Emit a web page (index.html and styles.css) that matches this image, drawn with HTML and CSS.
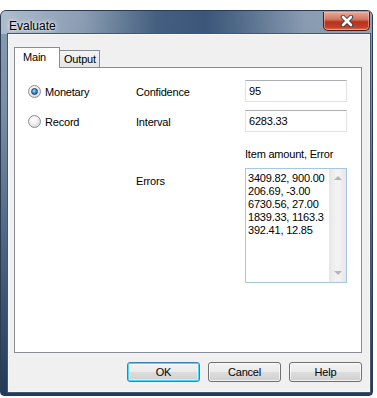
FILE: index.html
```html
<!DOCTYPE html>
<html lang="en">
<head>
    <meta charset="UTF-8">
    <meta name="viewport" content="width=device-width, initial-scale=1.0">
    <title>Evaluate</title>
    <link rel="stylesheet" href="styles.css">
</head>
<body>
    <div class="window">
        <div class="titlebar">
            <span class="title">Evaluate</span>
            <button class="close" aria-label="Close">
                <svg width="14" height="12" viewBox="0 0 14 12">
                    <path d="M3 2 L11 10 M11 2 L3 10" stroke="#3a3a3a" stroke-width="4.5" stroke-linecap="round"/>
                    <path d="M3 2 L11 10 M11 2 L3 10" stroke="#fff" stroke-width="2.6" stroke-linecap="round"/>
                </svg>
            </button>
        </div>

        <div class="client">
            <div class="tabs">
                <div class="tab active">Main</div>
                <div class="tab">Output</div>
            </div>

            <div class="panel">
                <div class="form">
                    <label class="radio checked"><span class="dot"></span>Monetary</label>
                    <span class="label">Confidence</span>
                    <div class="field">95</div>

                    <label class="radio"><span class="dot"></span>Record</label>
                    <span class="label">Interval</span>
                    <div class="field">6283.33</div>

                    <span class="hint">Item amount, Error</span>

                    <span class="label errors-label">Errors</span>
                    <div class="list">
                        <div class="list-text">3409.82, 900.00<br>206.69, -3.00<br>6730.56, 27.00<br>1839.33, 1163.3<br>392.41, 12.85</div>
                        <div class="scrollbar">
                            <span class="arrow up"></span>
                            <span class="arrow down"></span>
                        </div>
                    </div>
                </div>
            </div>

            <div class="buttons">
                <button class="btn default">OK</button>
                <button class="btn">Cancel</button>
                <button class="btn">Help</button>
            </div>
        </div>
    </div>
</body>
</html>
```

FILE: styles.css
```css
body {
    margin: 0;
    padding: 0;
    background-color: #fff;
    font-family: 'Liberation Sans', Arial, sans-serif;
    font-size: 11px;
    letter-spacing: -0.2px;
    color: #000;
}

.window {
    width: 373px;
    height: 386px;
    margin-top: 10px;
    box-sizing: border-box;
    padding: 0 2px 3px 7px;
    border: 1px solid #2b3c52;
    border-radius: 6px 6px 4px 4px;
    background: linear-gradient(to bottom, #8a9cb2 0%, #7a8ea6 25%, #46607f 65%, #1f3a5c 100%);
    display: flex;
    flex-direction: column;
}

.titlebar {
    height: 23px;
    display: flex;
    align-items: flex-start;
    justify-content: space-between;
    margin: 0 -2px 0 -7px;
    padding-left: 8px;
    border-radius: 5px 5px 0 0;
    background: linear-gradient(90deg, rgba(190, 202, 215, 0.7) 0%, rgba(150, 166, 186, 0.2) 22%, rgba(60, 88, 122, 0.9) 42%, #3b5679 55%, rgba(60, 88, 122, 0.8) 62%, rgba(140, 158, 180, 0.2) 82%, rgba(160, 175, 195, 0.4) 100%);
}

.title {
    font-size: 12px;
    line-height: 12px;
    letter-spacing: 0;
    margin-top: 9px;
    color: #000;
    text-shadow: 0 0 6px #fff, 0 0 3px #fff;
}

.close {
    width: 47px;
    height: 19px;
    margin: 1px 2px 0 0;
    padding: 0;
    border: 1px solid #4b1c18;
    border-top: none;
    border-radius: 0 0 5px 5px;
    background: linear-gradient(to bottom, #e8a895 0%, #d27a66 40%, #b8321c 55%, #c2402a 85%, #dc7d5c 100%);
    box-shadow: inset 0 0 0 1px rgba(255, 200, 180, 0.5);
    display: flex;
    align-items: center;
    justify-content: center;
}

.client {
    height: 358px;
    box-sizing: border-box;
    border: 1px solid #f5f7fa;
    outline: 1px solid #44576f;
    background-color: #f0f0f0;
    padding: 12px 7px 9px 5px;
    display: flex;
    flex-direction: column;
}

.tabs {
    height: 20px;
    display: flex;
    align-items: flex-end;
}

.tab {
    box-sizing: border-box;
    height: 17px;
    padding: 2px 0 0 4px;
    width: 40px;
    border: 1px solid #898c95;
    border-bottom: none;
    border-left: none;
    background: linear-gradient(to bottom, #f3f3f3, #e5e5e5);
}

.tab.active {
    position: relative;
    z-index: 1;
    width: 46px;
    height: 21px;
    margin-bottom: -1px;
    padding: 3px 0 0 8px;
    border-left: 1px solid #898c95;
    background: #fff;
}

.panel {
    flex: 1;
    border: 1px solid #898c95;
    background-color: #fff;
    padding: 12px 0 0 13px;
}

.form {
    display: grid;
    grid-template-columns: 108px 109px 102px;
    grid-template-rows: 22px 22px 20px 115px;
    row-gap: 8px;
}

.radio {
    display: flex;
    align-items: center;
    gap: 4px;
    margin-top: 1px;
}

.dot {
    width: 11px;
    height: 11px;
    border: 1px solid #8a8d92;
    border-radius: 50%;
    background: radial-gradient(circle at 40% 35%, #fff 0%, #f0f0f0 40%, #c9cbce 100%);
    display: flex;
    align-items: center;
    justify-content: center;
}

.radio.checked .dot::after {
    content: "";
    width: 5px;
    height: 5px;
    border-radius: 50%;
    border: 1px solid #1c3e6a;
    background: radial-gradient(circle at 40% 35%, #a8dcff 0%, #2b87d3 55%, #0d4d95 100%);
}

.label {
    display: flex;
    align-items: center;
    margin-top: 1px;
}

.field {
    box-sizing: border-box;
    border: 1px solid #e2e3ea;
    border-top-color: #abadb3;
    padding: 4px 0 0 3px;
    line-height: 13px;
}

.hint {
    grid-column: 3;
    align-self: end;
    line-height: 13px;
    margin-bottom: -1px;
}

.errors-label {
    grid-column: 2;
    align-items: flex-start;
    padding-top: 6px;
    line-height: 13px;
}

.list {
    box-sizing: border-box;
    border: 1px solid #a9c5e3;
    display: flex;
    overflow: hidden;
}

.list-text {
    flex: 1;
    padding: 3px 0 0 2px;
    line-height: 13px;
    white-space: nowrap;
    overflow: hidden;
}

.scrollbar {
    width: 17px;
    background: linear-gradient(90deg, #e6e6e6, #f2f2f2 40%, #f2f2f2 60%, #e6e6e6);
    display: flex;
    flex-direction: column;
    justify-content: space-between;
    align-items: center;
    padding: 7px 0 7px;
    box-sizing: border-box;
}

.arrow {
    width: 0;
    height: 0;
    border-left: 4px solid transparent;
    border-right: 4px solid transparent;
}

.arrow.up {
    border-bottom: 4px solid #b5b5b5;
}

.arrow.down {
    border-top: 4px solid #b5b5b5;
}

.buttons {
    margin-top: 9px;
    display: flex;
    justify-content: flex-end;
    gap: 8px;
}

.btn {
    width: 73px;
    height: 20px;
    padding: 0;
    border: 1px solid #707070;
    border-radius: 3px;
    background: linear-gradient(to bottom, #f2f2f2 0%, #ebebeb 48%, #dddddd 52%, #cfcfcf 100%);
    box-shadow: inset 0 0 0 1px rgba(255, 255, 255, 0.7);
    font-family: 'Liberation Sans', Arial, sans-serif;
    font-size: 11px;
    letter-spacing: -0.2px;
    color: #000;
}

.btn.default {
    border-color: #3c7fb1;
    box-shadow: inset 0 0 0 1px #48d8fb, inset 0 0 0 2px rgba(255, 255, 255, 0.4);
}
```
